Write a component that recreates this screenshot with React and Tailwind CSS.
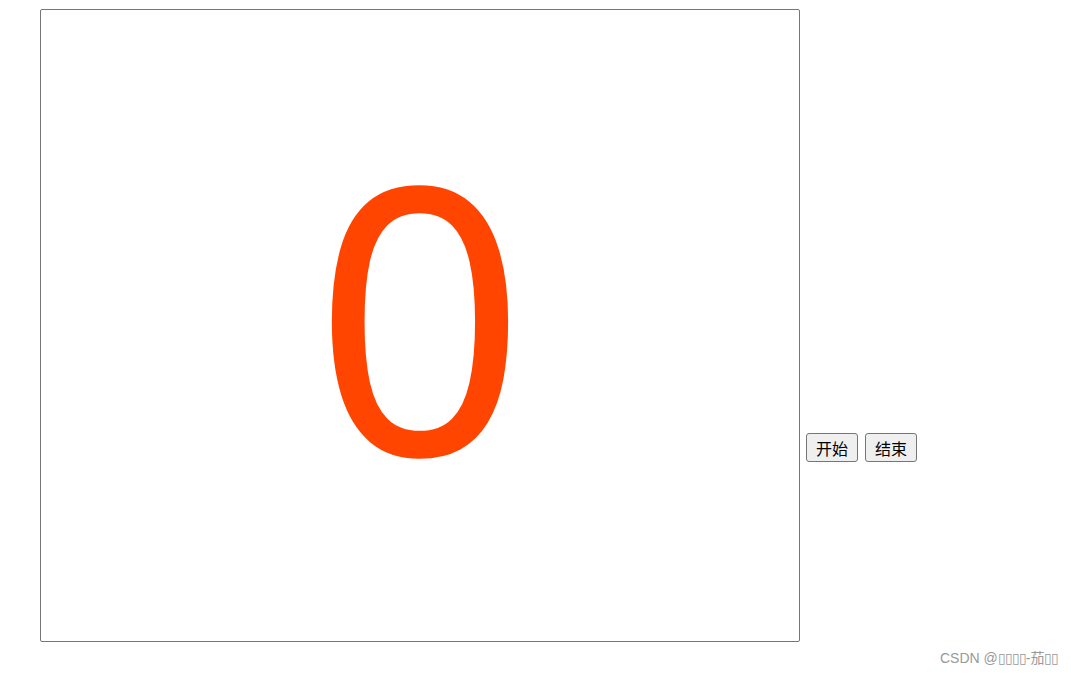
export default function App() {
    return (
        <div className="relative w-[1071px] h-[675px] bg-white overflow-hidden">
            <div className="flex items-baseline pt-[9px] pl-[40px]">
                {/* Counter box */}
                <div className="w-[760px] h-[633px] border border-[#767676] rounded-[2px] flex items-center justify-center">
                    <span className="text-[372px] leading-none text-[#ff4500] font-['Noto_Sans',sans-serif] -mt-[30px]">0</span>
                </div>
                <div className="flex gap-[7px] ml-[6px]">
                    <button className="h-[29px] px-[9px] text-[16px] leading-none bg-[#efefef] border border-[#767676] rounded-[3px] text-black font-['Microsoft_YaHei','Noto_Sans_CJK_SC',sans-serif]">开始</button>
                    <button className="h-[29px] px-[9px] text-[16px] leading-none bg-[#efefef] border border-[#767676] rounded-[3px] text-black font-['Microsoft_YaHei','Noto_Sans_CJK_SC',sans-serif]">结束</button>
                </div>
            </div>
            {/* Watermark */}
            <div className="absolute left-[940px] top-[648px] text-[14px] text-[#999999] font-['Liberation_Sans','Noto_Sans_CJK_SC',sans-serif]">
                CSDN @<span className="tracking-[-1px]">▯▯▯▯</span>-茄<span className="tracking-[-1px]">▯▯</span>
            </div>
        </div>
    );
}
